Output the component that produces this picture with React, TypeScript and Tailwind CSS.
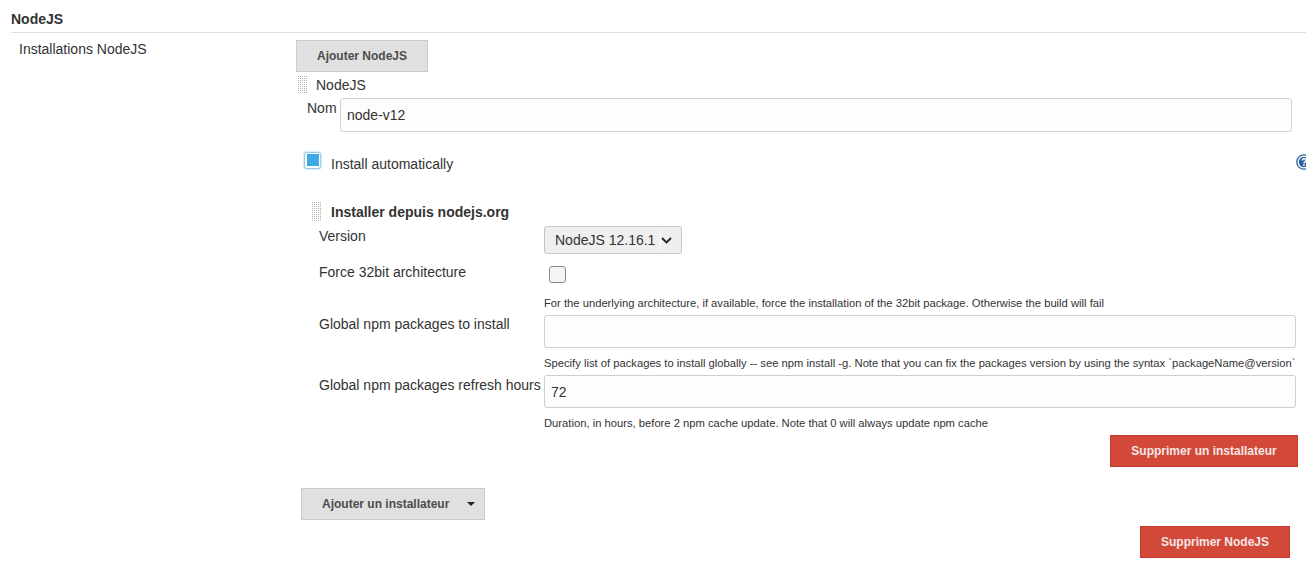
const FONT = "font-['Liberation_Sans',Arial,sans-serif]";

function Handle({ rows = 9 }: { rows?: number }) {
  return (
    <svg width="11" height={rows * 2} className="shrink-0" aria-hidden="true">
      {Array.from({ length: rows * 5 }).map((_, i) => (
        <rect
          key={i}
          x={(i % 5) * 2}
          y={Math.floor(i / 5) * 2}
          width="1"
          height="1"
          fill="#b0b0b0"
        />
      ))}
    </svg>
  );
}

function Help({ text }: { text: string }) {
  return <p className="text-[11.22px] leading-[13px] text-[#333]">{text}</p>;
}

function GreyButton({ children, className }: { children: React.ReactNode; className: string }) {
  return (
    <button className={`flex items-center bg-[#e0e0e0] border border-[#cbcbcb] text-[12px] font-bold text-[#4d4d4d] ${className}`}>
      {children}
    </button>
  );
}

function RedButton({ children, className }: { children: React.ReactNode; className: string }) {
  return (
    <button className={`block bg-[#d24939] border border-[#c4392b] text-[12px] font-bold text-[#f5e6e6] ${className}`}>
      {children}
    </button>
  );
}

export default function App() {
  return (
    <div className={`${FONT} w-[1306px] h-[566px] overflow-hidden bg-white text-[14px] text-[#333]`}>
      <div className="ml-[11px] h-[33px] border-b border-[#e0e0e0] pt-[10px] font-bold leading-[18px]">NodeJS</div>

      <div className="flex">
        <div className="w-[296px] shrink-0 pl-[19px] pt-[8px] leading-[16px]">Installations NodeJS</div>

        <div className="flex-1 min-w-0 pt-[7px]">
          <GreyButton className="w-[132px] h-[32px] justify-center">Ajouter NodeJS</GreyButton>

          <div className="flex items-center h-[18px] mt-[4px] pl-[2px]">
            <Handle />
            <span className="ml-[7px] leading-[18px]">NodeJS</span>
          </div>

          <div className="flex mt-[4px] pl-[11px]">
            <span className="w-[33px] shrink-0 leading-[16px] pt-[2px]">Nom</span>
            <input
              readOnly
              value="node-v12"
              className="w-[952px] h-[34px] rounded-[3px] border border-[#cfcfcf] bg-[#fdfdfd] px-[6px] text-[14px] text-[#333] outline-none"
            />
          </div>

          <div className="flex items-center h-[18px] mt-[19px] pl-[8px]">
            <span className="flex items-center justify-center size-[17px] rounded-[3px] border border-[#9cc9e6] bg-white shadow-[0_0_2px_#7fbce6]">
              <span className="block size-[12px] bg-[#3fa9e8]" />
            </span>
            <span className="ml-[10px] relative top-[4px] leading-[16px]">Install automatically</span>
            <svg width="16" height="16" viewBox="0 0 16 16" className="ml-auto -mr-[6px] relative top-[2px] shrink-0" aria-hidden="true">
              <circle cx="8" cy="8" r="7.2" fill="white" stroke="#2d5f9e" strokeWidth="1.3" />
              <circle cx="8" cy="8" r="5.2" fill="#2d5f9e" />
              <text x="8" y="11.5" textAnchor="middle" fontSize="10" fontWeight="700" fill="white">?</text>
            </svg>
          </div>

          <div className="flex items-center h-[20px] mt-[33px] pl-[16px]">
            <Handle rows={10} />
            <span className="ml-[8px] font-bold leading-[18px]">Installer depuis nodejs.org</span>
          </div>

          <div className="flex mt-[4px] pl-[23px]">
            <span className="w-[225px] shrink-0 pt-[2px] leading-[16px]">Version</span>
            <div className="relative flex items-center w-[138px] h-[28px] rounded-[3px] border border-[#c6c6c6] bg-[#efefef] pl-[10px]">
              <span>NodeJS 12.16.1</span>
              <span className="absolute left-[115px] top-[4px] h-[18px] w-px bg-white" />
              <svg width="11" height="7" viewBox="0 0 11 7" className="absolute right-[9px] top-[10px]" aria-hidden="true">
                <path d="M1 1l4.5 4.5L10 1" fill="none" stroke="#222" strokeWidth="1.8" />
              </svg>
            </div>
          </div>

          <div className="flex mt-[12px] pl-[23px]">
            <span className="w-[230px] shrink-0 -mt-[2px] h-[16px] leading-[16px]">Force 32bit architecture</span>
            <span className="block size-[17px] rounded-[3px] border border-[#8a8a8a] bg-[#f4f4f4]" />
          </div>

          <div className="ml-[248px] mt-[14px]">
            <Help text="For the underlying architecture, if available, force the installation of the 32bit package. Otherwise the build will fail" />
          </div>

          <div className="flex mt-[5px] pl-[23px]">
            <span className="w-[225px] shrink-0 pt-[1px] leading-[16px]">Global npm packages to install</span>
            <div className="w-[752px] h-[33px] rounded-[3px] border border-[#cfcfcf] bg-[#fdfdfd]" />
          </div>

          <div className="ml-[248px] mt-[9px]">
            <Help text="Specify list of packages to install globally -- see npm install -g. Note that you can fix the packages version by using the syntax `packageName@version`" />
          </div>

          <div className="flex mt-[5px] pl-[23px]">
            <span className="w-[225px] shrink-0 pt-[2px] leading-[16px] whitespace-nowrap">Global npm packages refresh hours</span>
            <input
              readOnly
              value="72"
              className="w-[752px] h-[33px] rounded-[3px] border border-[#cfcfcf] bg-[#fdfdfd] px-[6px] text-[14px] text-[#333] outline-none"
            />
          </div>

          <div className="ml-[248px] mt-[9px]">
            <Help text="Duration, in hours, before 2 npm cache update. Note that 0 will always update npm cache" />
          </div>

          <RedButton className="w-[188px] h-[32px] ml-[814px] mt-[5px]">Supprimer un installateur</RedButton>

          <GreyButton className="w-[184px] h-[32px] ml-[5px] mt-[21px] pl-[20px]">
            <span>Ajouter un installateur</span>
            <span className="ml-auto mr-[9px] w-0 h-0 border-x-[4px] border-x-transparent border-t-[4px] border-t-[#222]" />
          </GreyButton>

          <RedButton className="w-[150px] h-[32px] ml-[844px] mt-[6px]">Supprimer NodeJS</RedButton>
        </div>
      </div>
    </div>
  );
}
